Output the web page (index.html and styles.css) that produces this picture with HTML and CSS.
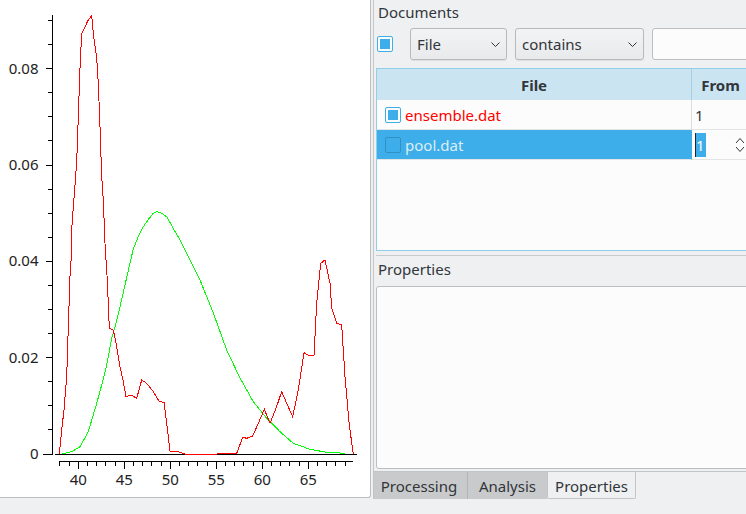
FILE: index.html
```html
<!DOCTYPE html>
<html>
<head>
<meta charset="utf-8">
<link rel="stylesheet" href="styles.css">
</head>
<body>
<div class="app">
  <div class="plot">
    <svg class="chart" width="370" height="497" viewBox="0 0 370 497">
      <g class="axis" shape-rendering="crispEdges" stroke="#000" stroke-width="1" fill="none">
        <path d="M52.5 15V454.5 M46 68.5H52 M46 165.5H52 M46 261.5H52 M46 357.5H52 M43 454.5H52 M48 20.5H52 M48 44.5H52 M48 92.5H52 M48 116.5H52 M48 140.5H52 M48 189.5H52 M48 213.5H52 M48 237.5H52 M48 285.5H52 M48 309.5H52 M48 333.5H52 M48 381.5H52 M48 405.5H52 M48 429.5H52"/>
        <path d="M55 454.5H357"/>
        <path d="M59 461.5H353 M59.5 461.5V466 M69.5 461.5V466 M78.5 461.5V469 M87.5 461.5V466 M96.5 461.5V466 M105.5 461.5V466 M115.5 461.5V466 M124.5 461.5V469 M133.5 461.5V466 M142.5 461.5V466 M151.5 461.5V466 M161.5 461.5V466 M170.5 461.5V469 M179.5 461.5V466 M188.5 461.5V466 M197.5 461.5V466 M207.5 461.5V466 M216.5 461.5V469 M225.5 461.5V466 M234.5 461.5V466 M243.5 461.5V466 M253.5 461.5V466 M262.5 461.5V469 M271.5 461.5V466 M280.5 461.5V466 M289.5 461.5V466 M299.5 461.5V466 M308.5 461.5V469 M317.5 461.5V466 M326.5 461.5V466 M335.5 461.5V466 M345.5 461.5V466"/>
      </g>
      <g class="ylabels" text-anchor="end">
        <text x="38.5" y="73.7">0.08</text>
        <text x="38.5" y="170">0.06</text>
        <text x="38.5" y="266.4">0.04</text>
        <text x="38.5" y="362.7">0.02</text>
        <text x="38.5" y="459.2">0</text>
      </g>
      <g class="xlabels" text-anchor="middle">
        <text x="78.3" y="485">40</text>
        <text x="124.3" y="485">45</text>
        <text x="170.3" y="485">50</text>
        <text x="216.3" y="485">55</text>
        <text x="262.3" y="485">60</text>
        <text x="308.3" y="485">65</text>
      </g>
      <polyline class="curve-green" shape-rendering="crispEdges" fill="none" stroke="#00ff00" stroke-width="1" points="61.7,454 71.7,451.7 80,446.7 88.3,431.7 96.7,403.3 101.7,385 106.7,365 111.7,338.3 115,326.7 120,306.7 125,285 130,263 133.3,249 138.3,236.7 143.3,226.7 148.3,219.5 153.3,213.3 156.7,211.7 160,212.5 163,214 167,217 173,228 180,240 185,250 190,260 200,280 213.3,313 226.7,350 240,378 253.3,401.7 266.7,418.3 280,431.7 293.3,443.3 310,449.3 326.7,452.3 345,453.3"/>
      <polyline class="curve-red" shape-rendering="crispEdges" fill="none" stroke="#ff0000" stroke-width="1" points="59.3,454 61.7,430 64,410 66.7,376.7 68.3,326.7 70,276.7 71.7,250 71.7,230 73.3,206.7 75,185 76.7,161.7 78.3,116.7 80,68.3 81.7,33.3 85,26.7 88.3,20 91.7,15.7 93.3,33.3 96.7,58.3 98.3,83.3 100,126.7 101.7,176.7 103.3,200 105,243.3 106,260 107.3,280 109.3,328.3 113.3,330 116.7,346.7 120,366.7 123.3,381.7 126,396.7 131,395 136.7,398.3 141.7,380 146.7,383.3 153.3,391.7 159.3,401.7 164,402.3 166.7,423.3 170,451 178.3,451.7 185,454 216.7,454 236.7,453.3 242.7,437.3 246.7,438.3 252.7,436 258.3,423.3 264.3,409.3 270,423.3 276,408.3 281.7,391.7 286.7,403.3 292.7,416.7 298.3,390 304,352.7 309.3,356 314,355 316.7,303.3 320.7,263.3 325,260 330,283.3 331.7,308.3 336.7,323.3 341.7,325 345,376.7 349.3,425 353.3,454"/>
    </svg>
  </div>

  <div class="side">
    <div class="pane">
      <section class="docs">
        <div class="group-title">Documents</div>
        <div class="filter">
          <span class="check checked filter-check"></span>
          <div class="combo combo-file">
            <span>File</span>
            <svg class="chev" width="9" height="5" viewBox="0 0 9 5"><path d="M0.5 0.5L4.5 4.5L8.5 0.5" fill="none" stroke="#31363b" stroke-width="1"/></svg>
          </div>
          <div class="combo combo-op">
            <span>contains</span>
            <svg class="chev" width="9" height="5" viewBox="0 0 9 5"><path d="M0.5 0.5L4.5 4.5L8.5 0.5" fill="none" stroke="#31363b" stroke-width="1"/></svg>
          </div>
          <div class="line-input"></div>
        </div>
        <div class="table">
          <div class="thead">
            <div class="th c-file">File</div>
            <div class="th c-from">From</div>
            <div class="th c-rest"></div>
          </div>
          <div class="row">
            <div class="td c-file"><span class="check checked"></span><span class="fname red">ensemble.dat</span></div>
            <div class="td c-from">1</div>
            <div class="td c-rest"></div>
          </div>
          <div class="row selected">
            <div class="td c-file"><span class="check unchecked"></span><span class="fname">pool.dat</span></div>
            <div class="td c-from editor">
              <span class="sel">1</span>
              <svg class="spin" width="10" height="16" viewBox="0 0 10 16"><path d="M1 6L5 1.5L9 6 M1 10L5 14.5L9 10" fill="none" stroke="#31363b" stroke-width="1"/></svg>
            </div>
            <div class="td c-rest"></div>
          </div>
        </div>
      </section>
      <section class="props">
        <div class="group-title">Properties</div>
        <div class="textarea"></div>
      </section>
    </div>
    <div class="tabbar">
      <div class="tab t-proc">Processing</div>
      <div class="tab t-ana">Analysis</div>
      <div class="tab t-prop active">Properties</div>
    </div>
  </div>
</div>
</body>
</html>
```

FILE: styles.css
```css
* { box-sizing: border-box; }
html, body { margin: 0; padding: 0; }
body {
  width: 746px;
  height: 514px;
  overflow: hidden;
  background: #eff0f1;
  font-family: "Noto Sans", "DejaVu Sans", sans-serif;
  font-size: 15px;
  color: #31363b;
}
.app { display: flex; height: 514px; }

/* plot */
.plot {
  flex: none;
  width: 371px;
  height: 498px;
  background: #ffffff;
  border-right: 1px solid #bdbebf;
  border-bottom: 1px solid #bdbebf;
  border-bottom-right-radius: 3px;
}
.chart { display: block; }
.chart text {
  font-family: "Noto Sans", sans-serif;
  font-size: 15px;
  fill: #222;
}

/* right side */
.side {
  flex: 1;
  min-width: 0;
  overflow: hidden;
  padding-left: 2px;
  display: flex;
  flex-direction: column;
}
.pane {
  flex: none;
  height: 472px;
  border-left: 1px solid #c3c4c5;
  border-bottom: 1px solid #c3c4c5;
  padding-left: 2px;
  display: flex;
  flex-direction: column;
}
.docs {
  flex: none;
  height: 255px;
  padding-top: 2px;
  display: flex;
  flex-direction: column;
}
.group-title {
  height: 20px;
  line-height: 20px;
  padding-left: 2px;
  white-space: nowrap;
}

.filter {
  display: flex;
  align-items: center;
  height: 32px;
  margin-top: 6px;
}
.check {
  flex: none;
  display: inline-block;
  width: 16px;
  height: 16px;
  border-radius: 2px;
  position: relative;
}
.check.checked {
  border: 1px solid #3daee9;
  background: #fcfcfc;
}
.check.checked::after {
  content: "";
  position: absolute;
  left: 2px;
  top: 2px;
  width: 10px;
  height: 10px;
  background: #3daee9;
}
.check.unchecked {
  border: 1px solid rgba(30, 90, 130, 0.35);
  background: transparent;
}
.filter-check { margin-left: 1px; }

.combo {
  flex: none;
  height: 32px;
  display: flex;
  align-items: center;
  justify-content: space-between;
  padding: 0 6px 0 6px;
  border: 1px solid #b9babb;
  border-radius: 3px;
  background: linear-gradient(#f2f3f4, #e9eaeb);
  box-shadow: 0 1px 1px rgba(0, 0, 0, 0.08);
  white-space: nowrap;
}
.combo-file { width: 97px; margin-left: 17px; }
.combo-op { width: 129px; margin-left: 8px; }
.chev { display: block; }
.line-input {
  flex: none;
  width: 200px;
  height: 32px;
  margin-left: 8px;
  border: 1px solid #bcbebf;
  border-radius: 3px;
  background: #fcfcfc;
}

/* table */
.table {
  flex: none;
  width: 520px;
  height: 183px;
  margin-top: 8px;
  border: 1px solid #93cee9;
  background: #fcfcfc;
}
.thead {
  display: flex;
  height: 31px;
  background: #cbe4f2;
}
.th {
  height: 31px;
  padding-top: 6px;
  line-height: 20px;
  font-weight: bold;
  text-align: center;
  border-right: 1px solid #a9cde2;
  white-space: nowrap;
}
.th.c-from { padding-right: 4px; }
.c-file { width: 315px; flex: none; }
.c-from { width: 62px; flex: none; }
.c-rest { flex: 1; }
.row {
  display: flex;
  height: 30px;
}
.td {
  height: 30px;
  display: flex;
  align-items: center;
  line-height: 20px;
  border-bottom: 1px solid #e3e4e5;
  white-space: nowrap;
}
.td.c-file { padding-left: 8px; border-right: 1px solid #dcdddd; }
.td.c-from { padding-left: 3px; }
.fname { margin-left: 4px; }
.red { color: #ff0000; }
.row.selected .td.c-file { background: #3daee9; border-right-color: #3daee9; }
.row.selected .fname { color: #dcedf7; }
.editor {
  background: #fcfcfc;
  position: relative;
}
.sel {
  display: inline-block;
  height: 24px;
  line-height: 24px;
  padding: 0 1px 0 0;
  background: #3daee9;
  color: #fcfcfc;
  border-left: 1px solid #232629;
}
.spin {
  position: absolute;
  left: 43px;
  top: 7px;
}

/* properties */
.props {
  flex: 1;
  display: flex;
  flex-direction: column;
  border-top: 1px solid #c9cacb;
  padding-top: 3px;
  padding-bottom: 2px;
}
.textarea {
  flex: 1;
  width: 520px;
  margin-top: 7px;
  border: 1px solid #bcbebf;
  border-radius: 3px;
  background: #fcfcfc;
}

/* tabs */
.tabbar {
  flex: none;
  display: flex;
  height: 27px;
}
.tab {
  flex: none;
  height: 27px;
  padding-top: 4px;
  line-height: 20px;
  text-align: center;
  background: #c9cacb;
  white-space: nowrap;
}
.t-proc { width: 95px; border-left: 1px solid #c3c4c5; border-right: 1px solid #b3b4b5; padding-right: 3px; }
.t-ana { width: 79px; }
.t-prop { width: 89px; }
.tab.active {
  background: #eff0f1;
  border-left: 1px solid #c3c4c5;
  border-right: 1px solid #c3c4c5;
  border-bottom: 1px solid #c3c4c5;
  border-bottom-left-radius: 2px;
  border-bottom-right-radius: 2px;
}
```
